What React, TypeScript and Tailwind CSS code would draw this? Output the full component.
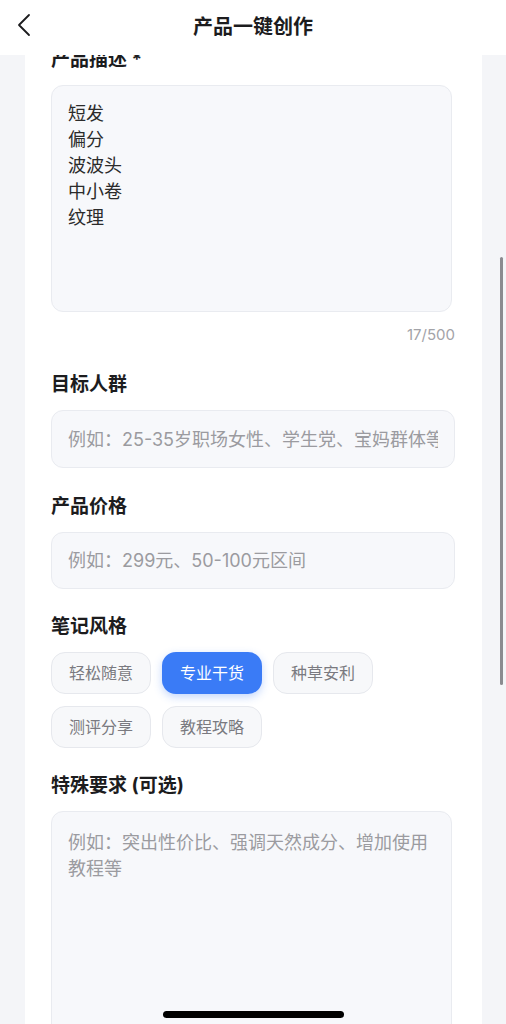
import { useState } from "react";

const styles = ["轻松随意", "专业干货", "种草安利", "测评分享", "教程攻略"];

function Label({ children }: { children: React.ReactNode }) {
  return (
    <div className="text-[19px] leading-[26px] font-bold text-[#1c1c1e] mb-[12px]">
      {children}
    </div>
  );
}

export default function App() {
  const [selected, setSelected] = useState("专业干货");
  const [desc, setDesc] = useState("短发\n偏分\n波波头\n中小卷\n纹理");

  return (
    <div
      className="relative w-[506px] h-[1024px] overflow-hidden flex flex-col bg-[#f4f5f8]"
      style={{ fontFamily: 'Inter, "Noto Sans CJK SC", "Noto Sans", sans-serif' }}
    >
      {/* header */}
      <div className="relative z-10 h-[55px] shrink-0 bg-white flex items-center justify-center">
        <button type="button" className="absolute left-[14px] top-[11px] p-[2px]">
          <svg width="16" height="24" viewBox="0 0 16 24" fill="none">
            <path d="M13 2 L3 12 L13 22" stroke="#1c1c1e" strokeWidth="1.8" strokeLinecap="round" strokeLinejoin="round" />
          </svg>
        </button>
        <h1 className="text-[20px] font-bold text-[#1c1c1e] -mt-[2px]">产品一键创作</h1>
      </div>

      {/* scroll area */}
      <div className="flex-1 overflow-hidden pl-[25px] pr-[24px]">
        <div className="bg-white pl-[26px] pr-[27px] -mt-[8px] pb-10">
          <Label>产品描述 *</Label>
          <textarea
            value={desc}
            onChange={(e) => setDesc(e.target.value)}
            className="block w-[401px] h-[227px] resize-none rounded-[12px] border border-[#e9ebf0] bg-[#f7f8fb] px-[16px] py-[15px] text-[18px] leading-[26px] text-[#2b2b2b] outline-none"
          />
          <div className="mt-[12px] text-right text-[15px] leading-[22px] text-[#a3a3a8]">17/500</div>

          <div className="mt-[26px]">
            <Label>目标人群</Label>
            <input
              placeholder="例如：25-35岁职场女性、学生党、宝妈群体等"
              className="block w-full h-[58px] rounded-[12px] border border-[#e9ebf0] bg-[#f7f8fb] px-[16px] text-[18px] text-[#2b2b2b] placeholder:text-[#9b9ba0] outline-none"
            />
          </div>

          <div className="mt-[26px]">
            <Label>产品价格</Label>
            <input
              placeholder="例如：299元、50-100元区间"
              className="block w-full h-[57px] rounded-[12px] border border-[#e9ebf0] bg-[#f7f8fb] px-[16px] text-[18px] text-[#2b2b2b] placeholder:text-[#9b9ba0] outline-none"
            />
          </div>

          <div className="mt-[25px]">
            <Label>笔记风格</Label>
            <div className="flex flex-wrap gap-x-[11px] gap-y-[12px] w-[330px]">
              {styles.map((s) => (
                <button
                  key={s}
                  type="button"
                  onClick={() => setSelected(s)}
                  className={
                    s === selected
                      ? "w-[100px] h-[42px] rounded-[14px] bg-[#3a7bf6] text-white text-[16px] shadow-[0_3px_8px_rgba(58,123,246,0.3)]"
                      : "w-[100px] h-[42px] rounded-[14px] border border-[#e6e8ed] bg-[#f7f8fa] text-[#7a7a80] text-[16px]"
                  }
                >
                  {s}
                </button>
              ))}
            </div>
          </div>

          <div className="mt-[25px]">
            <Label>特殊要求 (可选)</Label>
            <textarea
              placeholder="例如：突出性价比、强调天然成分、增加使用教程等"
              className="block w-[401px] h-[227px] resize-none rounded-[12px] border border-[#e9ebf0] bg-[#f7f8fb] px-[16px] py-[18px] text-[18px] leading-[26px] text-[#2b2b2b] placeholder:text-[#9b9ba0] outline-none"
            />
          </div>
        </div>
      </div>

      {/* scroll indicator */}
      <div className="absolute right-[3px] top-[257px] w-[3px] h-[428px] rounded-full bg-[#8b8b90]" />
      {/* home indicator */}
      <div className="absolute left-[163px] top-[1011px] w-[181px] h-[7px] rounded-full bg-black" />
    </div>
  );
}
